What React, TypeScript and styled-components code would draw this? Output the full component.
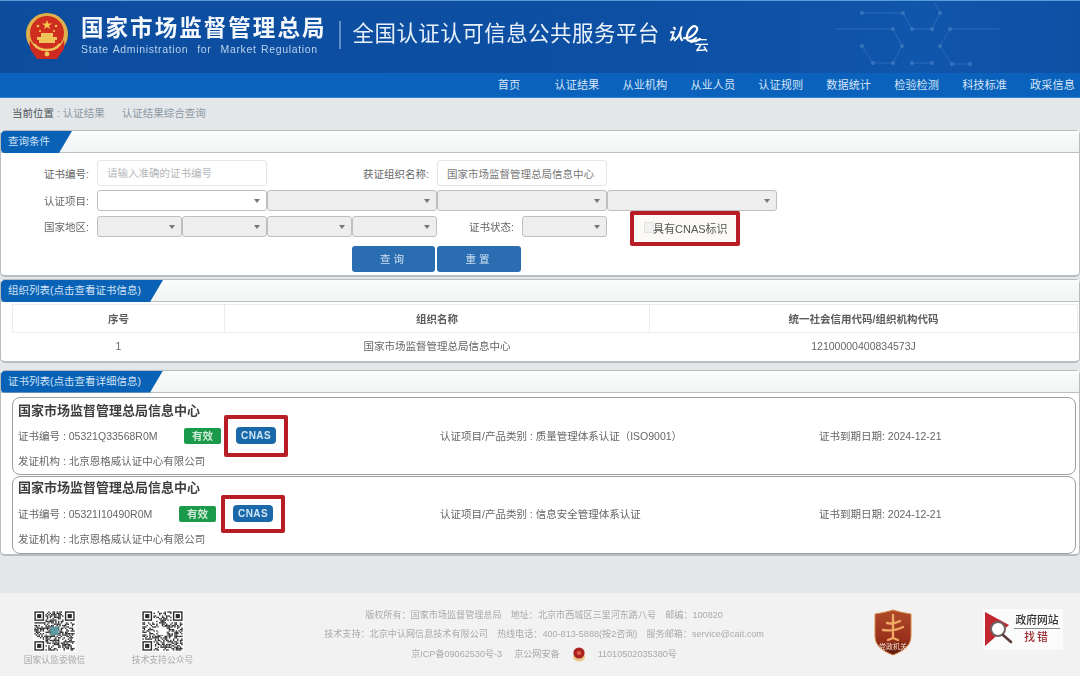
import styled, { createGlobalStyle } from "styled-components";

const GlobalStyle = createGlobalStyle`
  html, body {
    margin: 0;
    padding: 0;
    height: 676px;
    overflow: hidden;
    background: #e3e7e9;
    font-family: "Liberation Sans", "Noto Sans CJK SC", sans-serif;
  }
  * { box-sizing: border-box; }
`;

const Page = styled.div`
  width: 1080px;
  height: 676px;
  display: flex;
  flex-direction: column;
  overflow: hidden;
  filter: blur(0.45px);
`;

const Header = styled.header`
  height: 73px;
  flex: none;
  position: relative;
  display: flex;
  align-items: center;
  padding-left: 25px;
  border-top: 1px solid #5b9bd8;
  background: linear-gradient(90deg, #0c4d9e 0%, #0d4fa3 60%, #1056ac 85%, #0e50a4 100%);
`;

const Lines = styled.svg`
  position: absolute;
  right: 30px;
  top: 0;
`;

const TitleBlock = styled.div`
  margin-left: 12px;
  display: flex;
  flex-direction: column;
  margin-top: -2px;
`;

const MainTitle = styled.div`
  font-size: 22.5px;
  line-height: 26px;
  font-weight: 700;
  letter-spacing: 2.05px;
  color: #f4f8fc;
  white-space: nowrap;
`;

const SubTitle = styled.div`
  font-size: 10.5px;
  line-height: 14px;
  letter-spacing: 0.64px;
  word-spacing: 1px;
  color: #b9d2ee;
  white-space: pre;
`;

const Divider = styled.div`
  width: 2px;
  height: 28px;
  margin: -4px 12px 0 12px;
  background: #5c8fca;
`;

const PlatformTitle = styled.div`
  font-size: 21.5px;
  letter-spacing: 0.45px;
  color: #e9f1fa;
  white-space: nowrap;
  margin-top: -12px;
`;

const CloudLogo = styled.div`
  position: relative;
  width: 46px;
  height: 34px;
  margin-left: 7px;
  margin-top: 2px;
  color: #fff;
`;

const LogoRen = styled.span`
  position: absolute;
  left: 1px;
  top: 4px;
  font-size: 16px;
  line-height: 20px;
  font-style: italic;
  font-weight: 700;
`;

const LogoYun = styled.span`
  position: absolute;
  left: 28px;
  top: 15px;
  font-size: 14px;
  line-height: 18px;
  font-weight: 500;
`;

const Nav = styled.nav`
  height: 25px;
  flex: none;
  display: grid;
  grid-auto-flow: column;
  grid-auto-columns: 67.95px;
  padding-left: 475px;
  overflow: hidden;
  background: #0a62bc;
  border-bottom: 1px solid #2f86d6;
`;

const NavItem = styled.a`
  font-size: 11.2px;
  line-height: 25px;
  text-align: center;
  color: #d4e5f6;
  white-space: nowrap;
`;

const Breadcrumb = styled.div`
  height: 32px;
  flex: none;
  display: flex;
  align-items: center;
  padding: 0 0 4px 12px;
  font-size: 10.5px;
  color: #8c98a3;
  background: #e3e7e9;
`;

const CrumbHead = styled.span`
  color: #4d5257;
`;

const CrumbLast = styled.span`
  margin-left: 17px;
`;

const Panel = styled.section<{ $gap?: number }>`
  margin-top: ${(p) => p.$gap ?? 0}px;
  flex: none;
  background: #fff;
  border: 1px solid #b9bcbd;
  border-bottom: 2px solid #b9bcbd;
  border-radius: 5px;
`;

const PanelHead = styled.div`
  display: flex;
  height: 22px;
  background: linear-gradient(180deg, #fbfcfc, #f1f3f4);
  border-bottom: 1px solid #bcbfc0;
`;

const Tab = styled.div`
  height: 22px;
  padding: 0 22px 0 7px;
  font-size: 10.5px;
  line-height: 21px;
  color: #cfe2f5;
  background: #0a62b6;
  border-radius: 4px 0 0 4px;
  clip-path: polygon(0 0, 100% 0, calc(100% - 13px) 100%, 0 100%);
  white-space: nowrap;
`;

const Form = styled.div`
  display: grid;
  grid-template-columns: 96px repeat(8, 85px);
  grid-template-rows: 26px 22px 26px 26px;
  row-gap: 4px;
  padding: 7px 0 3px;
`;

const Label = styled.label<{ $span?: number; $tall?: boolean }>`
  grid-column: span ${(p) => p.$span ?? 1};
  height: ${(p) => (p.$tall ? 26 : 21)}px;
  display: flex;
  align-items: center;
  justify-content: flex-end;
  padding-right: 8px;
  font-size: 10.5px;
  color: #666;
  white-space: nowrap;
`;

const TextInput = styled.input`
  grid-column: span 2;
  width: 100%;
  height: 26px;
  padding: 0 9px;
  font: inherit;
  font-size: 10.5px;
  color: #777;
  background: #fff;
  border: 1px solid #e6e7e8;
  border-radius: 3px;
  outline: none;

  &::placeholder {
    color: #b5b8bb;
  }
`;

const Select = styled.div<{ $span?: number; $on?: boolean }>`
  grid-column: span ${(p) => p.$span ?? 1};
  position: relative;
  height: 21px;
  background: ${(p) => (p.$on ? "#fff" : "#eeeeee")};
  border: 1px solid #bdbfc1;
  border-radius: 3px;

  &::after {
    content: "";
    position: absolute;
    right: 6px;
    top: 8px;
    border-left: 3px solid transparent;
    border-right: 3px solid transparent;
    border-top: 4px solid #777;
  }
`;

const Annotated = styled.div`
  grid-column: span 2;
  align-self: start;
  display: flex;
  align-items: center;
  width: 110px;
  height: 35px;
  margin: -5px 0 -4px 23px;
  padding: 0 0 2px 10px;
  font-size: 11px;
  color: #555;
  background: #fbfaf7;
  border: 4px solid #b81c24;
  border-radius: 2px;
  white-space: nowrap;
`;

const Check = styled.span`
  width: 10px;
  height: 11px;
  flex: none;
  margin-right: -1px;
  background: #f1f1f1;
  border: 1px solid #e2e2e2;
`;

const ButtonSpacer = styled.div`
  grid-column: span 4;
`;

const Button = styled.button<{ $first?: boolean }>`
  height: 26px;
  width: ${(p) => (p.$first ? 83 : 84)}px;
  padding: 0 0 2px;
  border: none;
  border-radius: 3px;
  font: inherit;
  font-size: 10.5px;
  letter-spacing: 3px;
  color: #cfe0f1;
  background: #2a6db0;
`;

const Table = styled.table`
  width: 1065px;
  margin: 2px 0 1px 11px;
  border-collapse: collapse;
  table-layout: fixed;
`;

const Th = styled.th<{ $w: number }>`
  width: ${(p) => p.$w}px;
  height: 28px;
  padding: 0;
  font-size: 10.5px;
  font-weight: 700;
  color: #5c5c5c;
  border: 1px solid #ececec;
`;

const Td = styled.td`
  height: 27px;
  padding: 0 0 1px;
  font-size: 10.5px;
  text-align: center;
  color: #666;
`;

const CardList = styled.div`
  display: flex;
  flex-direction: column;
  gap: 1px;
  padding: 4px 3px 0 11px;
`;

const Card = styled.article`
  height: 78px;
  padding: 4px 0 0 5px;
  border: 1px solid #9c9fa1;
  border-radius: 8px;
  background: #fff;
`;

const CardTitle = styled.h3<{ $lift: number; $drop: number }>`
  margin: ${(p) => -p.$lift}px 0 ${(p) => p.$drop}px;
  height: 18px;
  font-size: 13px;
  line-height: 18px;
  font-weight: 700;
  color: #3e3e3e;
`;

const CardRow = styled.div`
  display: flex;
  align-items: center;
  height: 26px;
  font-size: 10.5px;
  color: #666;
  white-space: nowrap;
`;

const CertNo = styled.div`
  width: 422px;
  display: flex;
  align-items: center;
`;

const CertCode = styled.span<{ $w: number }>`
  width: ${(p) => p.$w}px;
  flex: none;
`;

const Status = styled.span`
  width: 37px;
  height: 16px;
  border-radius: 2px;
  text-align: center;
  font-size: 10.5px;
  line-height: 16px;
  font-weight: 700;
  color: #cdebd6;
  background: #1c9a4b;
`;

const CnasFrame = styled.div<{ $left: number; $h: number }>`
  display: flex;
  align-items: center;
  justify-content: center;
  width: 64px;
  height: ${(p) => p.$h}px;
  margin: -8px 0 -8px ${(p) => p.$left}px;
  border: 4px solid #b81c24;
  border-radius: 2px;
  background: #fff;
`;

const Cnas = styled.span`
  width: 40px;
  height: 17px;
  border-radius: 4px;
  font-size: 10px;
  line-height: 17px;
  font-weight: 700;
  letter-spacing: 0.4px;
  text-align: center;
  color: #cfe6f6;
  background: #1a68a9;
`;

const Category = styled.div`
  width: 379px;
`;

const Issuer = styled.div`
  font-size: 10.5px;
  line-height: 14px;
  margin-top: 5px;
  color: #666;
`;

const Footer = styled.footer`
  margin-top: 37px;
  flex: 1;
  display: flex;
  align-items: flex-start;
  padding: 17px 0 0 23px;
  background: #f2f2f2;
`;

const QrGroup = styled.div`
  width: 301px;
  display: flex;
  gap: 45px;
  flex: none;
`;

const QrBox = styled.figure`
  width: 63px;
  margin: 0;
  display: flex;
  flex-direction: column;
  align-items: center;
`;

const QrCaption = styled.figcaption`
  margin-top: 1px;
  font-size: 8.8px;
  line-height: 14px;
  color: #aaa;
  white-space: nowrap;
`;

const Legal = styled.div`
  width: 440px;
  flex: none;
  margin-top: -2px;
  display: flex;
  flex-direction: column;
  gap: 5px;
  font-size: 9.1px;
  line-height: 14px;
  text-align: center;
  color: #aaa;
`;

const LegalRow = styled.div`
  display: flex;
  align-items: center;
  justify-content: center;
  gap: 12px;
  white-space: nowrap;
`;

const ShieldWrap = styled.svg`
  margin: -1px 0 0 109px;
  flex: none;
`;

const GovBox = styled.div`
  width: 80px;
  height: 41px;
  margin: -1px 0 0 70px;
  flex: none;
  display: flex;
  align-items: center;
  background: #fbfbfb;
`;

const GovText = styled.div`
  flex: 1;
  display: flex;
  flex-direction: column;
  align-items: center;
  padding-right: 8px;
  font-size: 10.8px;
  font-weight: 500;
  line-height: 15px;
  color: #333;
`;

const GovTop = styled.span`
  width: 46px;
  text-align: center;
  white-space: nowrap;
  border-bottom: 1px solid #8a8a8a;
`;

const GovBottom = styled.span`
  margin-top: 1px;
  letter-spacing: 2px;
  color: #9c2b33;
`;

const Emblem = () => (
  <svg width="44" height="48" viewBox="0 0 44 48">
    <circle cx="22" cy="21" r="21" fill="#e0b04a" />
    <circle cx="22" cy="20" r="17" fill="#cf2d20" />
    <polygon points="22,7 23.2,10.5 27,10.5 24,12.7 25,16 22,14 19,16 20,12.7 17,10.5 20.8,10.5" fill="#f4c64e" />
    <circle cx="13" cy="13" r="1.3" fill="#f4c64e" />
    <circle cx="31" cy="13" r="1.3" fill="#f4c64e" />
    <circle cx="15" cy="18" r="1.1" fill="#f4c64e" />
    <circle cx="29" cy="18" r="1.1" fill="#f4c64e" />
    <path d="M12 24h20v3h-2v3h-16v-3h-2z" fill="#f0c25a" />
    <path d="M16 20h12v4h-12z" fill="#f0c25a" />
    <path d="M5 27c3 7 9 11 17 11s14-4 17-11c1 6 0 10-3 13l-4 6h-20l-4-6c-3-3-4-7-3-13z" fill="#cf2a22" />
    <path d="M9 31c3 4 8 6 13 6s10-2 13-6" fill="none" stroke="#f0c25a" strokeWidth="2.4" />
    <circle cx="22" cy="41" r="2.4" fill="#f0c25a" />
  </svg>
);

const techNodes = [
  [32, 12], [73, 12], [82, 28], [102, 28], [110, 12], [63, 28], [72, 45], [63, 62],
  [43, 62], [32, 45], [120, 28], [110, 45], [122, 63], [140, 63], [82, 62], [102, 62],
];

const TechLines = () => (
  <Lines width="220" height="72" viewBox="0 0 220 72" fill="none" stroke="#6ea4dc" strokeWidth="1" opacity="0.28">
    <path d="M32 12h41l9 16h20l8-16-5-10M5 28h58l9 17-9 17h-20l-11-17M120 28h50M120 28l-10 17 12 18h18M82 62h20" />
    <g fill="#9cc2ea" stroke="none">
      {techNodes.map(([x, y]) => (
        <circle key={`${x}-${y}`} cx={x} cy={y} r="2" />
      ))}
    </g>
  </Lines>
);

// stable pseudo-random pattern, only has to read as a QR code
const QrCode = ({ seed, logo }: { seed: number; logo: string }) => {
  const n = 29;
  const cells: [number, number][] = [];
  const inFinder = (x: number, y: number) =>
    (x < 8 && y < 8) || (x >= n - 8 && y < 8) || (x < 8 && y >= n - 8);
  let s = seed;
  for (let y = 0; y < n; y++) {
    for (let x = 0; x < n; x++) {
      s = (s * 1103515245 + 12345) & 0x7fffffff;
      if (!inFinder(x, y) && (s >> 16) % 100 < 52) cells.push([x, y]);
    }
  }
  const finders = [
    [0, 0],
    [n - 7, 0],
    [0, n - 7],
  ];
  return (
    <svg width="43" height="42" viewBox="-1 -1 31 31" preserveAspectRatio="none">
      <rect x="-1" y="-1" width="31" height="31" fill="#fff" />
      {cells.map(([x, y]) => (
        <rect key={`${x}-${y}`} x={x} y={y} width="1" height="1" fill="#2a2a2a" />
      ))}
      {finders.map(([x, y]) => (
        <g key={`${x}-${y}`}>
          <rect x={x + 0.5} y={y + 0.5} width="6" height="6" fill="#fff" stroke="#2a2a2a" />
          <rect x={x + 2} y={y + 2} width="3" height="3" fill="#2a2a2a" />
        </g>
      ))}
      <rect x="11.5" y="11.5" width="6" height="6" fill={logo} />
    </svg>
  );
};

const Shield = () => (
  <ShieldWrap width="40" height="47" viewBox="0 0 40 47">
    <defs>
      <linearGradient id="shieldFill" x1="0" y1="0" x2="0" y2="1">
        <stop offset="0" stopColor="#b04a2a" />
        <stop offset="0.65" stopColor="#98301b" />
        <stop offset="1" stopColor="#5e1a0e" />
      </linearGradient>
    </defs>
    <path d="M2 5c6-1 12-2 18-4 6 2 12 3 18 4v22c0 10-8 15-18 19C10 42 2 37 2 27z" fill="url(#shieldFill)" stroke="#d88a4a" strokeWidth="1" />
    <path d="M20 6v23M14 14c4 1 9 0 13-2M10 21c7 1 14 0 20-3M20 29l-5 2M20 29l5 2" fill="none" stroke="#f0a866" strokeWidth="2.4" strokeLinecap="round" />
    <text x="20" y="40" fontSize="7" textAnchor="middle" fill="#f3dcc8" fontFamily="Noto Sans CJK SC">党政机关</text>
  </ShieldWrap>
);

const GovFlag = () => (
  <svg width="31" height="38" viewBox="0 0 31 38" style={{ flex: "none" }}>
    <polygon points="2,2 26,15 2,36" fill="#c2262e" />
    <circle cx="15" cy="19" r="7" fill="#fff" stroke="#6f6262" strokeWidth="2" />
    <path d="M20 25l8 7" stroke="#5c3a3a" strokeWidth="2.6" strokeLinecap="round" />
  </svg>
);

const PoliceBadge = () => (
  <svg width="14" height="16" viewBox="0 0 14 16">
    <ellipse cx="7" cy="11" rx="6" ry="4.5" fill="#e8c98a" />
    <circle cx="7" cy="7" r="5.6" fill="#a8201f" />
    <circle cx="7" cy="7" r="2.2" fill="#dc5b4a" />
  </svg>
);

const navItems = ["首页", "认证结果", "从业机构", "从业人员", "认证规则", "数据统计", "检验检测", "科技标准", "政采信息"];

const certs = [
  { no: "05321Q33568R0M", w: 166, left: 3, frame: 42, lift: 0, drop: 3, category: "质量管理体系认证（ISO9001）" },
  { no: "05321I10490R0M", w: 161, left: 5, frame: 38, lift: 2, drop: 4, category: "信息安全管理体系认证" },
];

const App = () => {
  return (
    <>
      <GlobalStyle />
      <Page>
        <Header>
          <TechLines />
          <Emblem />
          <TitleBlock>
            <MainTitle>国家市场监督管理总局</MainTitle>
            <SubTitle>State Administration  for  Market Regulation</SubTitle>
          </TitleBlock>
          <Divider />
          <PlatformTitle>全国认证认可信息公共服务平台</PlatformTitle>
          <CloudLogo>
            <LogoRen>认</LogoRen>
            <svg width="46" height="34" viewBox="0 0 46 34" fill="none" stroke="#fff" strokeWidth="2.2" strokeLinecap="round">
              <path d="M17 17c5 1 11-3 13-8 1-3-2-5-5-3-4 3-6 9-5 12s6 2 9-1" />
              <path d="M24 21c3 0 6-1 9-3" />
            </svg>
            <LogoYun>云</LogoYun>
          </CloudLogo>
        </Header>

        <Nav>
          {navItems.map((item) => (
            <NavItem key={item}>{item}</NavItem>
          ))}
        </Nav>

        <Breadcrumb>
          <CrumbHead>当前位置</CrumbHead>&nbsp;: 认证结果
          <CrumbLast>认证结果综合查询</CrumbLast>
        </Breadcrumb>

        <Panel>
          <PanelHead>
            <Tab>查询条件</Tab>
          </PanelHead>
          <Form>
            <Label $tall>证书编号:</Label>
            <TextInput placeholder="请输入准确的证书编号" />
            <Label $span={2} $tall>获证组织名称:</Label>
            <TextInput defaultValue="国家市场监督管理总局信息中心" />
            <Label $span={2} />

            <Label>认证项目:</Label>
            <Select $span={2} $on />
            <Select $span={2} />
            <Select $span={2} />
            <Select $span={2} />

            <Label>国家地区:</Label>
            <Select />
            <Select />
            <Select />
            <Select />
            <Label>证书状态:</Label>
            <Select />
            <Annotated>
              <Check />
              具有CNAS标识
            </Annotated>

            <ButtonSpacer />
            <Button $first>查询</Button>
            <Button>重置</Button>
          </Form>
        </Panel>

        <Panel $gap={2}>
          <PanelHead>
            <Tab>组织列表(点击查看证书信息)</Tab>
          </PanelHead>
          <Table>
            <thead>
              <tr>
                <Th $w={212}>序号</Th>
                <Th $w={425}>组织名称</Th>
                <Th $w={428}>统一社会信用代码/组织机构代码</Th>
              </tr>
            </thead>
            <tbody>
              <tr>
                <Td>1</Td>
                <Td>国家市场监督管理总局信息中心</Td>
                <Td>12100000400834573J</Td>
              </tr>
            </tbody>
          </Table>
        </Panel>

        <Panel $gap={7}>
          <PanelHead>
            <Tab>证书列表(点击查看详细信息)</Tab>
          </PanelHead>
          <CardList>
            {certs.map((cert) => (
              <Card key={cert.no}>
                <CardTitle $lift={cert.lift} $drop={cert.drop}>国家市场监督管理总局信息中心</CardTitle>
                <CardRow>
                  <CertNo>
                    <CertCode $w={cert.w}>证书编号 : {cert.no}</CertCode>
                    <Status>有效</Status>
                    <CnasFrame $left={cert.left} $h={cert.frame}>
                      <Cnas>CNAS</Cnas>
                    </CnasFrame>
                  </CertNo>
                  <Category>认证项目/产品类别 : {cert.category}</Category>
                  <div>证书到期日期: 2024-12-21</div>
                </CardRow>
                <Issuer>发证机构 : 北京恩格威认证中心有限公司</Issuer>
              </Card>
            ))}
          </CardList>
        </Panel>

        <Footer>
          <QrGroup>
            <QrBox>
              <QrCode seed={17} logo="#5d9aa3" />
              <QrCaption>国家认监委微信</QrCaption>
            </QrBox>
            <QrBox>
              <QrCode seed={91} logo="#ffffff" />
              <QrCaption>技术支持公众号</QrCaption>
            </QrBox>
          </QrGroup>
          <Legal>
            <LegalRow>版权所有：国家市场监督管理总局　地址：北京市西城区三里河东路八号　邮编：100820</LegalRow>
            <LegalRow>技术支持：北京中认网信息技术有限公司　热线电话：400-813-5888(按2咨询)　服务邮箱：service@cait.com</LegalRow>
            <LegalRow>
              <span>京ICP备09062530号-3</span>
              <span>京公网安备</span>
              <PoliceBadge />
              <span>11010502035380号</span>
            </LegalRow>
          </Legal>
          <Shield />
          <GovBox>
            <GovFlag />
            <GovText>
              <GovTop>政府网站</GovTop>
              <GovBottom>找错</GovBottom>
            </GovText>
          </GovBox>
        </Footer>
      </Page>
    </>
  );
};

export default App;
